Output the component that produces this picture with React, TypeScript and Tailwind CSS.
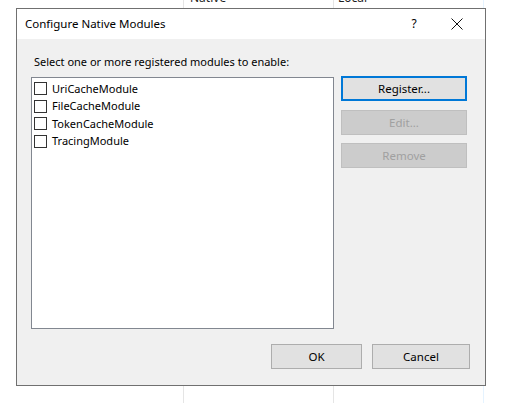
import React from "react";

const font = { fontFamily: '"Segoe UI", "Noto Sans", "Liberation Sans", sans-serif' };

const modules = ["UriCacheModule", "FileCacheModule", "TokenCacheModule", "TracingModule"];

function WinButton({
  label,
  primary,
  disabled,
  className = "",
}: {
  label: string;
  primary?: boolean;
  disabled?: boolean;
  className?: string;
}) {
  let look = "border border-[#adadad] bg-[#e1e1e1] text-black";
  if (primary) look = "border-2 border-[#0078d7] bg-[#e1e1e1] text-black";
  if (disabled) look = "border border-[#bfbfbf] bg-[#cccccc] text-[#a0a0a0]";
  return (
    <button
      disabled={disabled}
      className={`h-[25px] flex items-center justify-center text-[11.5px] leading-none ${look} ${className}`}
    >
      {label}
    </button>
  );
}

export default function App() {
  return (
    <div className="relative w-[528px] h-[403px] bg-white overflow-hidden text-[11px]" style={font}>
      {/* list view behind the dialog */}
      <div className="flex h-full">
        <div className="w-[184px] border-r border-[#e5e5e5]" />
        <div className="w-[150px] border-r border-[#e5e5e5]">
          <div className="-mt-[11px] pl-[6px] text-[12px] text-[#1e1e1e]">Native</div>
        </div>
        <div className="w-[150px] border-r border-[#e5f3ff]">
          <div className="-mt-[11px] pl-[4px] text-[12px] text-[#1e1e1e]">Local</div>
        </div>
      </div>

      {/* dialog window */}
      <div className="absolute left-[16px] top-[8px] w-[470px] h-[378px] border border-[#707070] bg-[#f0f0f0] flex flex-col">
        <div className="h-[30px] bg-white flex items-center pl-[8px] text-[11.5px] text-black">
          <span className="flex-1">Configure Native Modules</span>
          <span className="w-[14px] text-center mr-[30px] text-[12px]">?</span>
          <svg width="12" height="12" viewBox="0 0 12 12" className="mr-[22px]">
            <path d="M0.5 0.5 L11.5 11.5 M11.5 0.5 L0.5 11.5" stroke="#111" strokeWidth="1" />
          </svg>
        </div>

        <div className="flex-1 flex flex-col px-[14px]">
          <div className="mt-[15px] pl-[3px] text-black leading-[16px]">
            Select one or more registered modules to enable:
          </div>

          <div className="flex mt-[7px]">
            <div className="w-[303px] h-[252px] border border-[#828790] bg-white pt-[2px] pl-[2px]">
              {modules.map((m) => (
                <div key={m} className="h-[17.5px] flex items-center">
                  <span className="w-[13px] h-[13px] border border-[#333333] bg-white" />
                  <span className="ml-[5px] text-black">{m}</span>
                </div>
              ))}
            </div>

            <div className="ml-[7px] -mt-[1px] w-[126px] flex flex-col">
              <WinButton label="Register..." primary />
              <WinButton label="Edit..." disabled className="mt-[9px]" />
              <WinButton label="Remove" disabled className="mt-[8px]" />
            </div>
          </div>

          <div className="flex justify-end mt-[15px] pr-[1px]">
            <WinButton label="OK" className="w-[91px]" />
            <WinButton label="Cancel" className="w-[98px] ml-[10px]" />
          </div>
        </div>
      </div>
    </div>
  );
}
